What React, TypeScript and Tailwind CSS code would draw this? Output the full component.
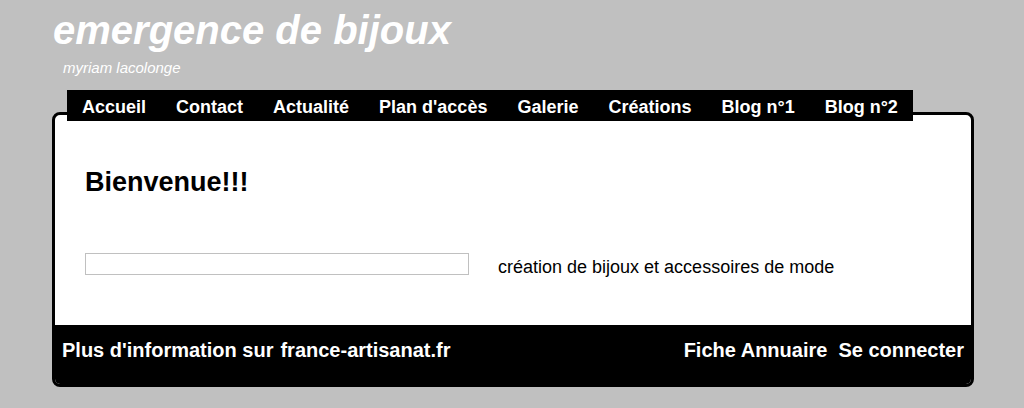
import React from 'react';

const navItems = ['Accueil', 'Contact', 'Actualité', "Plan d'accès", 'Galerie', 'Créations', 'Blog n°1', 'Blog n°2'];

export default function App() {
  return (
    <div className="min-h-[408px] w-[1024px] bg-[#c0c0c0] font-['Liberation_Sans',Arial,sans-serif]">
      <header className="pl-[53px] pt-[5px]">
        <h1 className="text-[40px] font-bold italic leading-[50px] text-white">emergence de bijoux</h1>
        <p className="mt-[3px] pl-[10px] text-[15px] italic leading-[20px] text-white">myriam lacolonge</p>
      </header>

      <div className="relative mx-[50px] mt-[12px]">
        <nav className="relative z-10 ml-[17px] flex h-[31px] w-fit items-center bg-black px-[15px]">
          {navItems.map((item, i) => (
            <span key={item} className={`pt-[3px] text-[18px] font-bold leading-[28px] text-white ${i > 0 ? 'ml-[30px]' : ''}`}>
              {item}
            </span>
          ))}
        </nav>

        <div className="-mt-[9px] ml-[2px] w-[922px] overflow-hidden rounded-[8px] border-[3px] border-black bg-white">
          <div className="h-[210px] px-[30px] pt-[51px]">
            <h2 className="text-[27px] font-bold leading-[32px] text-black">Bienvenue!!!</h2>
            <div className="mt-[55px] flex items-start">
              <div className="h-[22px] w-[384px] border border-[#c0c0c0]" />
              <p className="ml-[29px] mt-[3px] text-[18px] leading-[22px] text-black">création de bijoux et accessoires de mode</p>
            </div>
          </div>
          <footer className="flex h-[59px] items-start justify-between bg-black px-[7px] pt-[12px] text-[20px] font-bold leading-[26px] text-white">
            <div className="flex gap-[7px]">
              <span>Plus d'information sur</span>
              <span>france-artisanat.fr</span>
            </div>
            <div className="flex gap-[11px]">
              <span>Fiche Annuaire</span>
              <span>Se connecter</span>
            </div>
          </footer>
        </div>
      </div>
    </div>
  );
}
